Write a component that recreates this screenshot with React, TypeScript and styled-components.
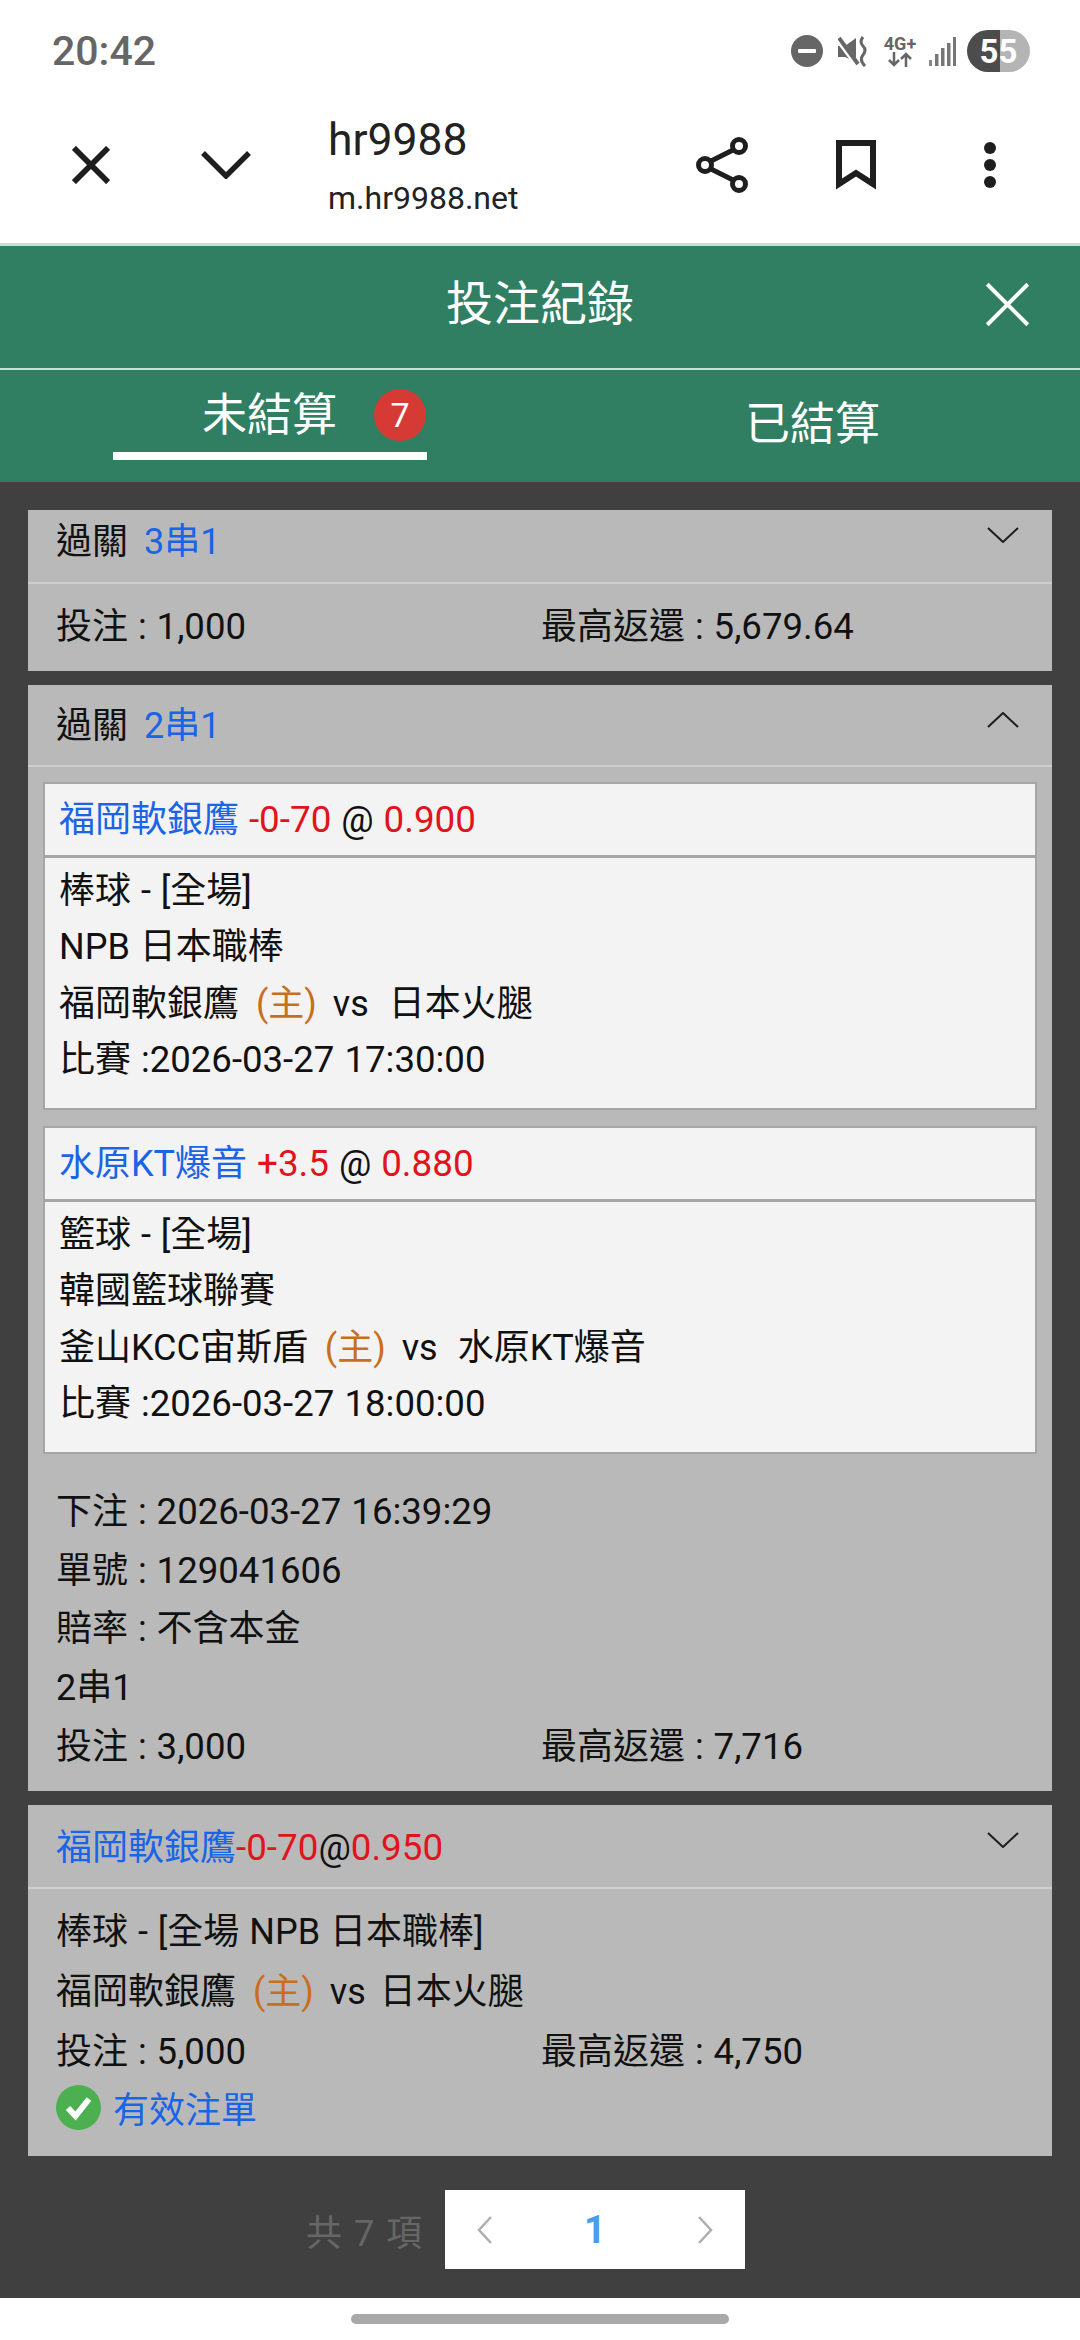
import React, { FC } from 'react'
import styled, { createGlobalStyle } from 'styled-components'

const GlobalStyle = createGlobalStyle`
	html, body {
		margin: 0;
		padding: 0;
		background: #fff;
	}
	* {
		box-sizing: border-box;
	}
`

const Screen = styled.div`
	width: 1080px;
	height: 2340px;
	display: flex;
	flex-direction: column;
	overflow: hidden;
	background: #fff;
	color: #111;
	font-family: Roboto, 'Noto Sans CJK TC', sans-serif;
	font-size: 36px;
	word-spacing: 1px;
`

const StatusBar = styled.div`
	height: 102px;
	flex: none;
	display: flex;
	align-items: center;
	justify-content: space-between;
	padding: 0 50px 0 52px;
`

const Clock = styled.div`
	font-size: 41px;
	font-weight: 500;
	color: #666;
`

const StatusIcons = styled.div`
	display: flex;
	align-items: center;
`

const MuteSlot = styled.div`
	display: flex;
	margin-left: 15px;
`

const NetworkIcon = styled.div`
	width: 34px;
	margin: 0 12px 0 15px;
	display: flex;
	flex-direction: column;
	align-items: center;
	color: #666;
	font-size: 18px;
	font-weight: 700;
	line-height: 17px;
	white-space: nowrap;
`

const BatteryPill = styled.div`
	width: 63px;
	height: 42px;
	margin-left: 11px;
	border-radius: 21px;
	display: flex;
	align-items: center;
	justify-content: center;
	background: linear-gradient(90deg, #4c4c4c 0 33px, #b4b4b4 33px);
	color: #fff;
	font-size: 33px;
	font-weight: 700;
`

const BrowserBar = styled.div`
	height: 141px;
	flex: none;
	display: flex;
	align-items: center;
	padding: 0 23px 16px;
`

const BrowserButton = styled.div<{ $width: number }>`
	width: ${(props) => props.$width}px;
	display: flex;
	justify-content: center;
	align-items: center;
	flex: none;
`

const PageInfo = styled.div`
	flex: 1;
	margin-left: 35px;
	display: flex;
	flex-direction: column;
	color: #222;
`

const PageTitle = styled.div`
	font-size: 44.5px;
	line-height: 54px;
	margin-top: 2px;
`

const PageUrl = styled.div`
	font-size: 32px;
	line-height: 42px;
	margin-top: 10px;
`

const BarEdge = styled.div`
	height: 3px;
	flex: none;
	background: #c6e0d6;
`

const GreenHeader = styled.div`
	flex: none;
	background: #317f63;
	color: #fff;
`

const TitleRow = styled.div`
	height: 122px;
	display: grid;
	grid-template-columns: 1fr auto 1fr;
	align-items: center;
	padding: 0 50px 6px;
`

const Title = styled.div`
	font-size: 47px;
	line-height: 60px;
`

const HeaderClose = styled.div`
	justify-self: end;
	display: flex;
`

const HeaderLine = styled.div`
	height: 2px;
	background: #c6e0d6;
`

const TabBar = styled.div`
	height: 112px;
	display: flex;
	align-items: flex-start;
	padding-left: 113px;
`

const ActiveTab = styled.div`
	width: 314px;
	height: 90px;
	display: flex;
	align-items: center;
	padding-left: 89px;
	border-bottom: 8px solid #fff;
	font-size: 45px;
`

const CountBadge = styled.div`
	width: 52px;
	height: 52px;
	margin: 8px 0 0 37px;
	border-radius: 50%;
	display: flex;
	align-items: center;
	justify-content: center;
	background: #d63a35;
	font-size: 34px;
	font-family: Roboto, sans-serif;
`

const PlainTab = styled.div`
	margin-left: 318px;
	height: 112px;
	display: flex;
	align-items: center;
	padding-bottom: 12px;
	font-size: 45px;
`

const ListArea = styled.div`
	flex: 1;
	background: #404040;
	padding: 28px 28px 0;
	display: flex;
	flex-direction: column;
`

const Card = styled.div<{ $gap?: number }>`
	flex: none;
	background: #b9b9b9;
	margin-top: ${(props) => props.$gap ?? 0}px;
`

const CardHeader = styled.div<{ $height: number; $lift: number; $chevronLift: number }>`
	height: ${(props) => props.$height}px;
	display: flex;
	align-items: center;
	justify-content: space-between;
	padding: 0 33px ${(props) => props.$lift}px 28px;
	border-bottom: 2px solid #cfcfcf;
	svg {
		margin-top: -${(props) => props.$chevronLift}px;
	}
`

const CardBody = styled.div<{ $top: number; $bottom: number }>`
	padding: ${(props) => props.$top}px 28px ${(props) => props.$bottom}px;
`

const TextRow = styled.div<{ $height: number }>`
	line-height: ${(props) => props.$height}px;
	height: ${(props) => props.$height}px;
	white-space: pre;
`

const StakeRow = styled.div<{ $height: number }>`
	display: grid;
	grid-template-columns: 485px 1fr;
	line-height: ${(props) => props.$height}px;
	height: ${(props) => props.$height}px;
`

const BetList = styled.div`
	padding: 15px 15px 0;
	display: flex;
	flex-direction: column;
	gap: 16px;
`

const BetBox = styled.div`
	height: 328px;
	background: #f3f3f3;
	border: 2px solid #a6a6a6;
`

const BetTitle = styled.div`
	height: 74px;
	padding: 0 14px 7px;
	display: flex;
	align-items: center;
	border-bottom: 3px solid #a6a6a6;
	white-space: pre;
`

const BetLines = styled.div`
	padding: 5px 14px 0;
`

const Num = styled.span`
	font-size: 36.6px;
`

const Blue = styled.span`
	color: #1a64e6;
`

const ParlayLabel = styled(Blue)`
	margin-left: 6px;
`

const Red = styled.span`
	color: #e0141c;
	font-size: 36.8px;
`

const Home = styled.span`
	color: #c96f1c;
	margin: 0 6px 0 7px;
`

const Vs = styled.span<{ $after: number }>`
	margin-right: ${(props) => props.$after}px;
`

const ValidRow = styled.div`
	display: flex;
	align-items: center;
	gap: 12px;
	height: 50.5px;
	color: #1a64e6;
`

const Pagination = styled.div`
	flex: none;
	display: flex;
	align-items: center;
	margin: 34px 0 0 278px;
`

const PageTotal = styled.div`
	width: 139px;
	color: #666;
	font-size: 36px;
	letter-spacing: 1px;
`

const Pager = styled.div`
	width: 300px;
	height: 79px;
	background: #fff;
	display: flex;
	align-items: center;
	justify-content: space-between;
	padding: 0 32px;
`

const PageNumber = styled.div`
	color: #4a9cf0;
	font-size: 38px;
	font-weight: 700;
`

const BottomBar = styled.div`
	height: 42px;
	flex: none;
	display: flex;
	justify-content: center;
	padding-top: 16px;
	background: #fff;
`

const HomeIndicator = styled.div`
	width: 378px;
	height: 10px;
	border-radius: 5px;
	background: #a9a9a9;
`

const CloseIcon: FC<{ size: number; stroke: string; width: number }> = ({ size, stroke, width }) => (
	<svg width={size} height={size} viewBox="0 0 40 40">
		<path d="M2 2 L38 38 M38 2 L2 38" fill="none" stroke={stroke} strokeWidth={width} />
	</svg>
)

const Chevron: FC<{ up?: boolean }> = ({ up }) => (
	<svg width="32" height="16" viewBox="0 0 32 16">
		<path d={up ? 'M1 15 L16 1 L31 15' : 'M1 1 L16 15 L31 1'} fill="none" stroke="#1c1c1c" strokeWidth="2" />
	</svg>
)

const DndIcon: FC = () => (
	<svg width="32" height="32" viewBox="0 0 32 32">
		<circle cx="16" cy="16" r="16" fill="#666" />
		<rect x="7" y="14" width="18" height="4" rx="1" fill="#fff" />
	</svg>
)

const VibrateIcon: FC = () => (
	<svg width="30" height="31" viewBox="0 0 30 31">
		<path d="M0 10 H7 L18 2 V26 L7 21 H0 Z" fill="#666" />
		<path d="M0 3 L20 30" stroke="#fff" strokeWidth="6" />
		<path d="M1 2 L20 28" stroke="#666" strokeWidth="4" />
		<path d="M25 1 Q21 6 25 10 Q29 14 25 19 Q21 24 27 30" fill="none" stroke="#666" strokeWidth="3" />
	</svg>
)

const SignalIcon: FC = () => (
	<svg width="27" height="29" viewBox="0 0 27 29">
		<rect x="0" y="23" width="3" height="6" fill="#888" />
		<rect x="6" y="17" width="3.5" height="12" fill="#777" />
		<rect x="12" y="11" width="3.5" height="18" fill="#777" />
		<rect x="18" y="6" width="3.5" height="23" fill="#777" />
		<rect x="24" y="0" width="3" height="29" fill="#777" />
	</svg>
)

const ShareIcon: FC = () => (
	<svg width="52" height="56" viewBox="0 0 52 56" fill="none" stroke="#1e1e1e" strokeWidth="5">
		<circle cx="43" cy="9" r="6.5" />
		<circle cx="9" cy="28" r="6.5" />
		<circle cx="43" cy="47" r="6.5" />
		<path d="M15 24 L37 13 M15 32 L37 43" />
	</svg>
)

const BookmarkIcon: FC = () => (
	<svg width="40" height="50" viewBox="0 0 40 50">
		<path d="M3 3 H37 V44 L20 33 L3 44 Z" fill="none" stroke="#1e1e1e" strokeWidth="6" />
	</svg>
)

const DotsIcon: FC = () => (
	<svg width="14" height="46" viewBox="0 0 14 46" fill="#1e1e1e">
		<circle cx="7" cy="6" r="6" />
		<circle cx="7" cy="23" r="6" />
		<circle cx="7" cy="40" r="6" />
	</svg>
)

const CheckIcon: FC = () => (
	<svg width="45" height="45" viewBox="0 0 45 45">
		<circle cx="22.5" cy="22.5" r="22.5" fill="#4caf50" />
		<path d="M12 23 L19.5 31 L33 14" fill="none" stroke="#fff" strokeWidth="6" />
	</svg>
)

const PagerArrow: FC<{ right?: boolean }> = ({ right }) => (
	<svg width="16" height="28" viewBox="0 0 16 28">
		<path d={right ? 'M2 1 L14 14 L2 27' : 'M14 1 L2 14 L14 27'} fill="none" stroke="#aeaeae" strokeWidth="2.5" />
	</svg>
)

interface BetProps {
	team: string
	line: string
	odds: string
	sport: string
	league: string
	homeTeam: string
	awayTeam: string
	time: string
}

const Bet: FC<BetProps> = (props: BetProps) => (
	<BetBox>
		<BetTitle>
			<span>
				<Blue>{props.team}</Blue> <Red>{props.line}</Red> @ <Red>{props.odds}</Red>
			</span>
		</BetTitle>
		<BetLines>
			<TextRow $height={56.3}>{props.sport} - [全場]</TextRow>
			<TextRow $height={56.3}>{props.league}</TextRow>
			<TextRow $height={56.3}>
				{props.homeTeam} <Home>(主)</Home> <Vs $after={20}>vs</Vs>
				{props.awayTeam}
			</TextRow>
			<TextRow $height={56.3}>
				比賽 :<Num>{props.time}</Num>
			</TextRow>
		</BetLines>
	</BetBox>
)

const Stake: FC<{ stake: string; payout: string; height: number }> = ({ stake, payout, height }) => (
	<StakeRow $height={height}>
		<span>
			投注 : <Num>{stake}</Num>
		</span>
		<span>
			最高返還 : <Num>{payout}</Num>
		</span>
	</StakeRow>
)

const App: FC = () => {
	return (
		<Screen>
			<GlobalStyle />
			<StatusBar>
				<Clock>20:42</Clock>
				<StatusIcons>
					<DndIcon />
					<MuteSlot>
						<VibrateIcon />
					</MuteSlot>
					<NetworkIcon>
						<span>4G+</span>
						<svg width="26" height="15" viewBox="0 0 26 15" fill="none" stroke="#666" strokeWidth="2.5">
							<path d="M7 0 V13 M2 8 L7 13 L12 8 M19 15 V2 M14 7 L19 2 L24 7" />
						</svg>
					</NetworkIcon>
					<SignalIcon />
					<BatteryPill>55</BatteryPill>
				</StatusIcons>
			</StatusBar>
			<BrowserBar>
				<BrowserButton $width={135}>
					<CloseIcon size={38} stroke="#1e1e1e" width={6} />
				</BrowserButton>
				<BrowserButton $width={135}>
					<svg width="50" height="28" viewBox="0 0 50 28">
						<path d="M2 2 L25 25 L48 2" fill="none" stroke="#1e1e1e" strokeWidth="5.5" />
					</svg>
				</BrowserButton>
				<PageInfo>
					<PageTitle>hr9988</PageTitle>
					<PageUrl>m.hr9988.net</PageUrl>
				</PageInfo>
				<BrowserButton $width={134}>
					<ShareIcon />
				</BrowserButton>
				<BrowserButton $width={134}>
					<BookmarkIcon />
				</BrowserButton>
				<BrowserButton $width={134}>
					<DotsIcon />
				</BrowserButton>
			</BrowserBar>
			<BarEdge />
			<GreenHeader>
				<TitleRow>
					<span />
					<Title>投注紀錄</Title>
					<HeaderClose>
						<CloseIcon size={45} stroke="#fff" width={3.5} />
					</HeaderClose>
				</TitleRow>
				<HeaderLine />
				<TabBar>
					<ActiveTab>
						未結算
						<CountBadge>7</CountBadge>
					</ActiveTab>
					<PlainTab>已結算</PlainTab>
				</TabBar>
			</GreenHeader>
			<ListArea>
				<Card>
					<CardHeader $height={74} $lift={17} $chevronLift={6}>
						<span>
							過關 <ParlayLabel>3串1</ParlayLabel>
						</span>
						<Chevron />
					</CardHeader>
					<CardBody $top={14} $bottom={15}>
						<Stake stake="1,000" payout="5,679.64" height={58} />
					</CardBody>
				</Card>
				<Card $gap={14}>
					<CardHeader $height={82} $lift={7} $chevronLift={3}>
						<span>
							過關 <ParlayLabel>2串1</ParlayLabel>
						</span>
						<Chevron up />
					</CardHeader>
					<BetList>
						<Bet
							team="福岡軟銀鷹"
							line="-0-70"
							odds="0.900"
							sport="棒球"
							league="NPB 日本職棒"
							homeTeam="福岡軟銀鷹"
							awayTeam="日本火腿"
							time="2026-03-27 17:30:00"
						/>
						<Bet
							team="水原KT爆音"
							line="+3.5"
							odds="0.880"
							sport="籃球"
							league="韓國籃球聯賽"
							homeTeam="釜山KCC宙斯盾"
							awayTeam="水原KT爆音"
							time="2026-03-27 18:00:00"
						/>
					</BetList>
					<CardBody $top={29} $bottom={15}>
						<TextRow $height={58.7}>
							下注 : <Num>2026-03-27 16:39:29</Num>
						</TextRow>
						<TextRow $height={58.7}>
							單號 : <Num>129041606</Num>
						</TextRow>
						<TextRow $height={58.7}>賠率 : 不含本金</TextRow>
						<TextRow $height={58.7}>2串1</TextRow>
						<Stake stake="3,000" payout="7,716" height={58.7} />
					</CardBody>
				</Card>
				<Card $gap={14}>
					<CardHeader $height={84} $lift={4} $chevronLift={8}>
						<span>
							<Blue>福岡軟銀鷹</Blue>
							<Red>-0-70</Red>@<Red>0.950</Red>
						</span>
						<Chevron />
					</CardHeader>
					<CardBody $top={14} $bottom={24}>
						<TextRow $height={59.5}>棒球 - [全場 NPB 日本職棒]</TextRow>
						<TextRow $height={59.5}>
							福岡軟銀鷹 <Home>(主)</Home> <Vs $after={14}>vs</Vs>日本火腿
						</TextRow>
						<Stake stake="5,000" payout="4,750" height={59.5} />
						<ValidRow>
							<CheckIcon />
							有效注單
						</ValidRow>
					</CardBody>
				</Card>
				<Pagination>
					<PageTotal>共 7 項</PageTotal>
					<Pager>
						<PagerArrow />
						<PageNumber>1</PageNumber>
						<PagerArrow right />
					</Pager>
				</Pagination>
			</ListArea>
			<BottomBar>
				<HomeIndicator />
			</BottomBar>
		</Screen>
	)
}

export default App
